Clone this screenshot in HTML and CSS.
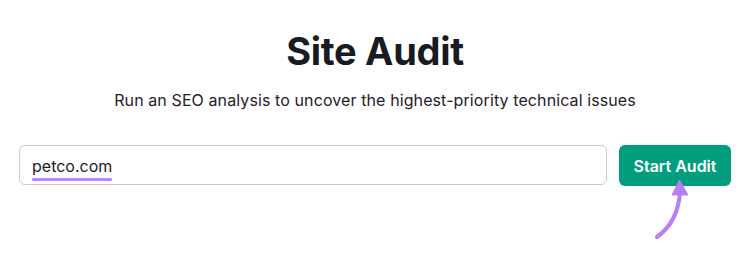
FILE: index.html
```html
<!DOCTYPE html>
<html>
<head>
<meta charset="utf-8">
<link rel="stylesheet" href="styles.css">
</head>
<body>
<div class="page">
  <h1 class="title">Site Audit</h1>
  <p class="subtitle">Run an SEO analysis to uncover the highest-priority technical issues</p>
  <div class="form">
    <div class="input"><span class="domain">petco.com</span></div>
    <button class="btn">Start Audit</button>
  </div>
  <svg class="arrow" width="60" height="70" viewBox="640 175 60 70">
    <path d="M657 237 Q678 222 680 192" fill="none" stroke="#b77ef5" stroke-width="4" stroke-linecap="round"/>
    <path d="M672 195 L679.5 180 L688 195 Z" fill="#b77ef5" stroke="#b77ef5" stroke-width="1" stroke-linejoin="round"/>
  </svg>
</div>
</body>
</html>
```
FILE: styles.css
```css
html, body { margin: 0; padding: 0; background: #fff; }
body { font-family: Inter, "Noto Sans", sans-serif; color: #191b23; }
.page { position: relative; width: 750px; height: 258px; padding-top: 28px; box-sizing: border-box; }
.title { margin: 0; text-align: center; font-size: 38px; font-weight: 700; line-height: 46px; letter-spacing: -0.3px; }
.subtitle { margin: 16px 0 0; text-align: center; font-size: 16px; line-height: 20px; color: #1f2128; letter-spacing: 0.1px; }
.form { display: flex; gap: 12px; margin: 35px 0 0 19px; width: 712px; }
.input { flex: 1; height: 40px; box-sizing: border-box; border: 1px solid #c9cbd1; border-radius: 6px; padding: 0 0 0 12px; display: flex; align-items: center; }
.domain { font-size: 16px; color: #191b23; line-height: 20px; position: relative; top: 1px; }
.domain::after { content: ""; position: absolute; left: 0; right: 0; bottom: -5px; height: 3px; border-radius: 2px; background: #c084f5; }
.btn { width: 112px; height: 41px; border: none; border-radius: 6px; background: #009e7d; color: #fff; font-family: Inter, sans-serif; font-weight: 600; font-size: 16px; padding: 0; }
.arrow { position: absolute; left: 640px; top: 175px; }
```
